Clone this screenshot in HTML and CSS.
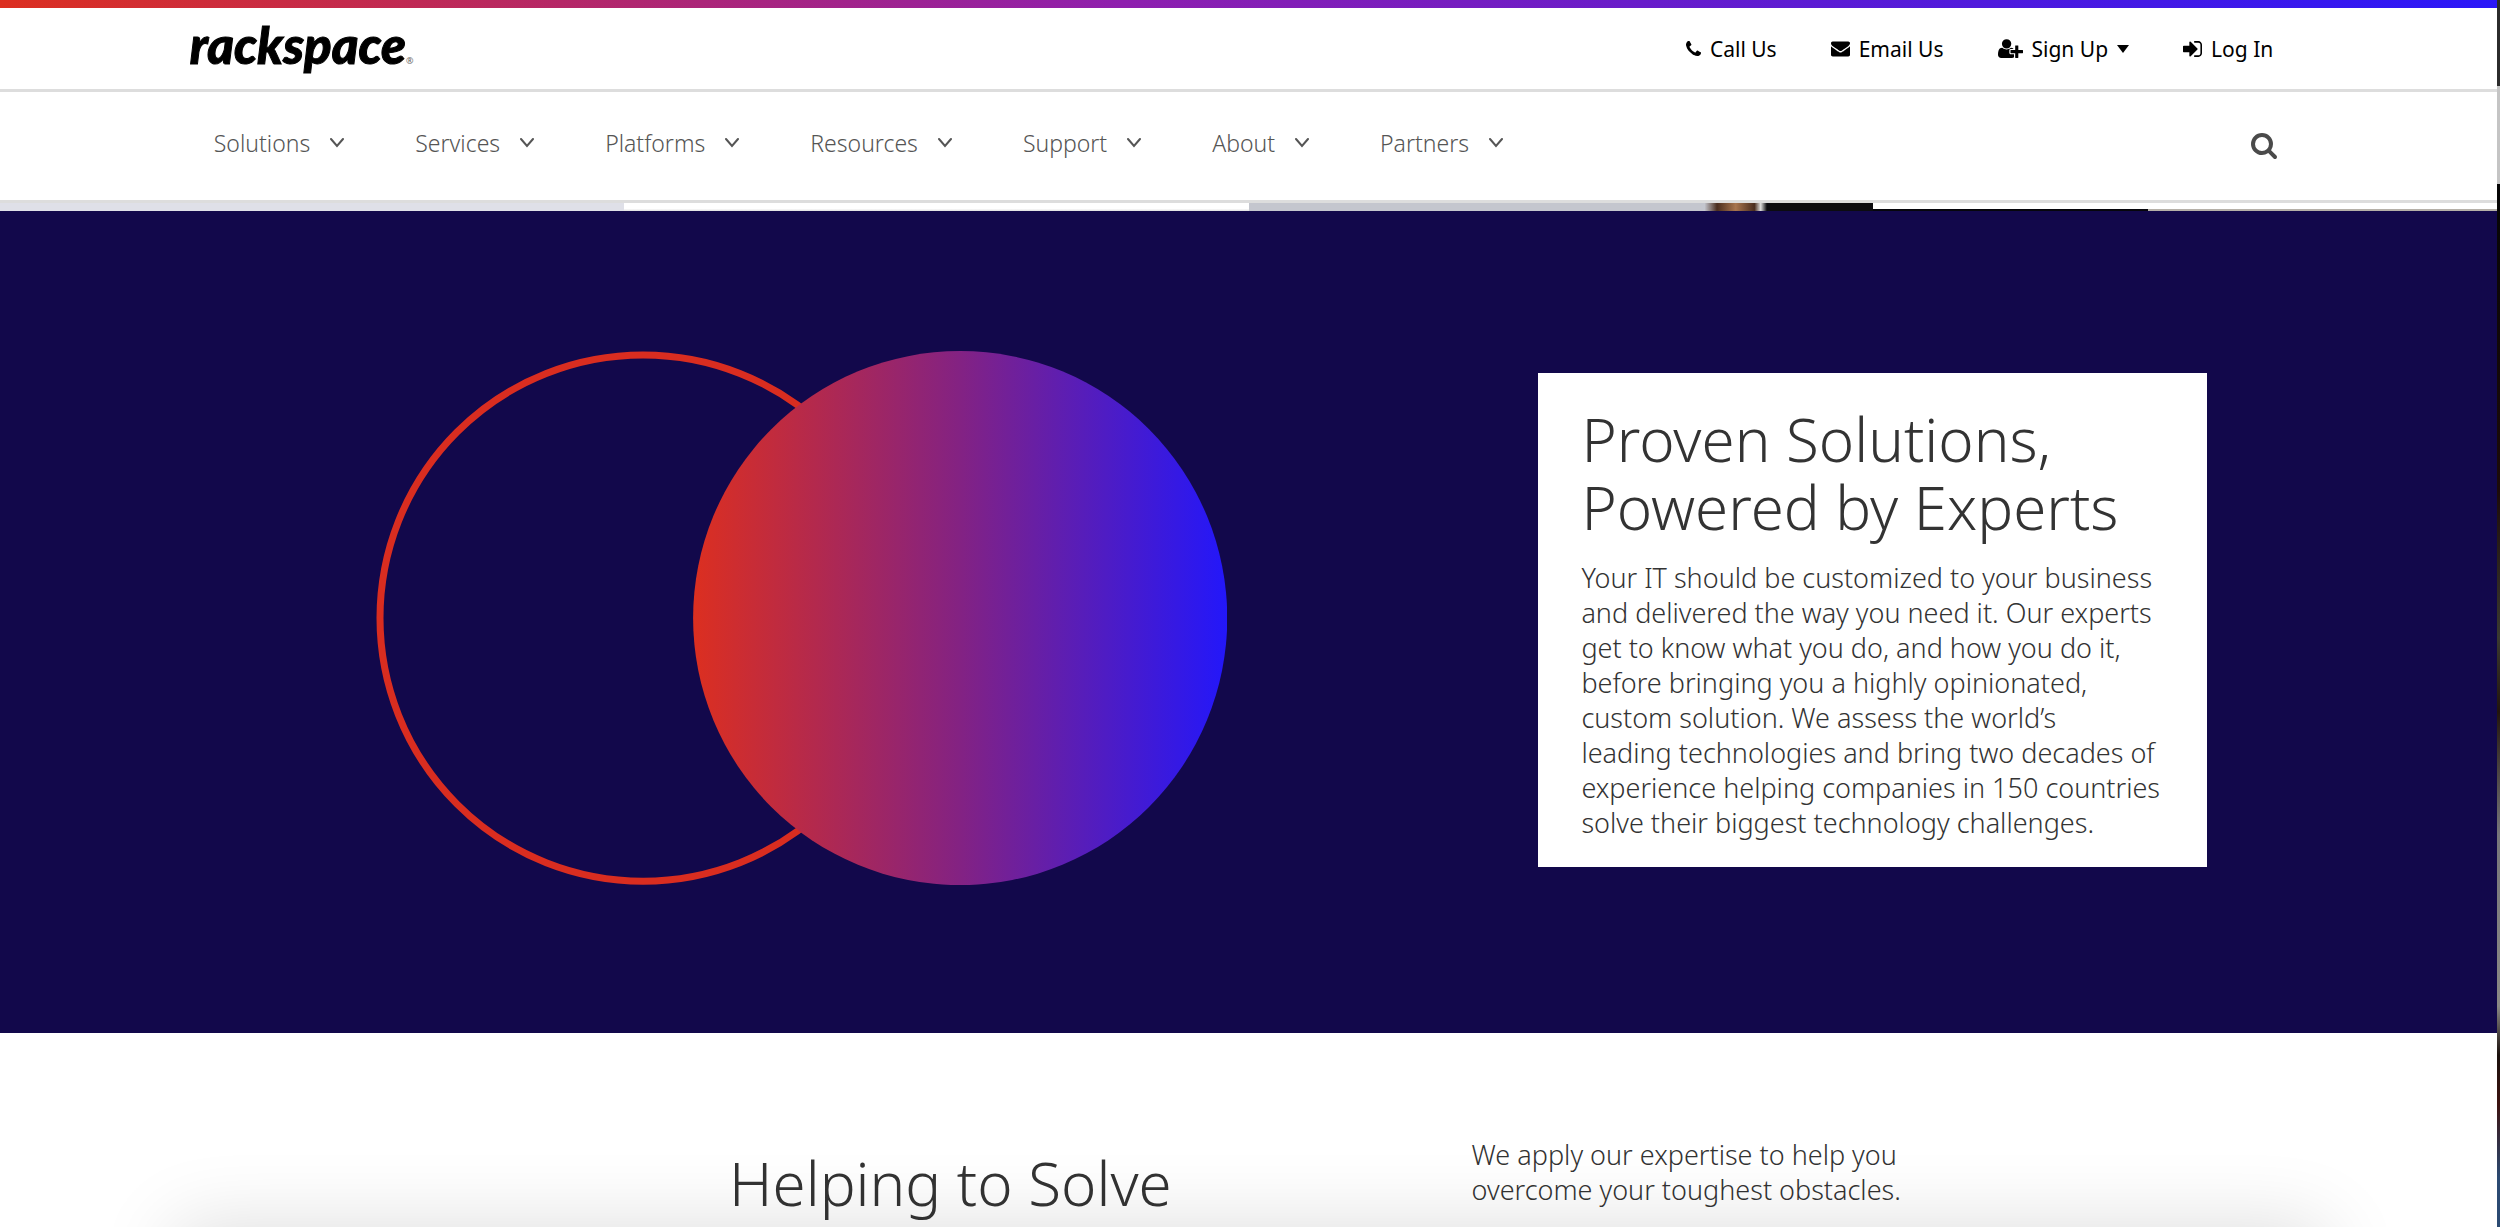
FILE: index.html
```html
<!DOCTYPE html>
<html lang="en">
<head>
  <meta charset="UTF-8">
  <meta name="viewport" content="width=device-width, initial-scale=1.0">
  <title>Rackspace</title>
  <link rel="stylesheet" href="styles.css">
</head>
<body>

<div class="page">

  <header class="header">
    <div class="brand-line"></div>

    <!-- Utility bar -->
    <div class="top-bar">
      <a class="logo" href="#">rackspace<span class="reg">®</span></a>
      <nav class="utility">
        <a href="#">
          <svg width="15" height="15" viewBox="0 128 1408 1408"><path d="M1408 1240q0 27-10 70.500t-21 68.500q-21 50-122 106-94 51-186 51-27 0-53-3.500t-57.500-12.500-47-14.500-55.500-20.500-49-18q-98-35-175-83-127-79-264-216t-216-264q-48-77-83-175-3-9-18-49t-20.500-55.500-14.500-47-12.500-57.500-3.500-53q0-92 51-186 56-101 106-122 25-11 68.500-21t70.500-10q14 0 21 3 18 6 53 76 11 19 30 54t35 63.500 31 53.500q3 4 17.500 25t21.500 35.500 7 28.500q0 20-28.500 50t-62 55-62 53-28.500 46q0 9 5 22.500t8.500 20.500 14 24 11.500 19q76 137 174 235t235 174q2 1 19 11.500t24 14 20.500 8.500 22.500 5q18 0 46-28.500t53-62 55-62 50-28.500q14 0 28.500 7t35.500 21.500 25 17.500q25 15 53.500 31t63.500 35 54 30q70 35 76 53 3 7 3 21z"/></svg>
          Call Us
        </a>
        <a href="#">
          <svg width="19" height="16" viewBox="0 256 1792 1408"><path d="M1792 710v794q0 66-47 113t-113 47h-1472q-66 0-113-47t-47-113v-794q44 49 101 87 362 246 497 345 57 42 92.500 65.500t94.500 48 110 24.500h2q51 0 110-24.500t94.500-48 92.500-65.500q170-123 498-345 57-39 100-87zm0-294q0 79-49 151t-122 123q-376 261-468 325-10 7-42.500 31t-54 38.500-52 32.500-57.500 27-50 9h-2q-23 0-50-9t-57.500-27-52-32.500-54-38.500-42.500-31q-91-64-262-182.500t-205-142.500q-62-42-117-115.500t-55-136.500q0-78 41.500-130t118.500-52h1472q65 0 112.500 47t47.500 113z"/></svg>
          Email Us
        </a>
        <a href="#">
          <svg width="25" height="19" viewBox="0 128 2048 1536"><path d="M704 896q-159 0-271.500-112.500t-112.500-271.500 112.500-271.500 271.500-112.500 271.500 112.500 112.500 271.500-112.500 271.500-271.500 112.500zm960 128h352q13 0 22.500 9.500t9.500 22.500v192q0 13-9.500 22.500t-22.500 9.500h-352v352q0 13-9.500 22.500t-22.500 9.500h-192q-13 0-22.500-9.500t-9.500-22.500v-352h-352q-13 0-22.500-9.500t-9.500-22.500v-192q0-13 9.500-22.500t22.500-9.500h352v-352q0-13 9.500-22.500t22.500-9.500h192q13 0 22.500 9.500t9.500 22.500v352zm-736 224q0 52 38 90t90 38h256v238q-68 50-171 50h-874q-121 0-194-69t-73-190q0-53 3.500-103.500t14-109 26.500-108.500 43-97.500 62-81 85.500-53.500 111.500-20q19 0 39 17 79 61 154.500 91.500t164.500 30.500 164.500-30.500 154.500-91.500q20-17 39-17 132 0 217 96h-223q-52 0-90 38t-38 90v192z"/></svg>
          Sign Up
          <svg width="12" height="8" viewBox="0 0 12 8"><path d="M0 0h12L6 8z"/></svg>
        </a>
        <a href="#">
          <svg width="19" height="16" viewBox="128 256 1536 1280"><path d="M1312 896q0 26-19 45l-544 544q-19 19-45 19t-45-19-19-45v-288h-448q-26 0-45-19t-19-45v-384q0-26 19-45t45-19h448v-288q0-26 19-45t45-19 45 19l544 544q19 19 19 45zm352-352v704q0 119-84.500 203.500t-203.500 84.500h-320q-13 0-22.500-9.500t-9.500-22.500q0-4-1-20t-.5-26.500 3-23.500 10-19.500 20.500-6.500h320q66 0 113-47t47-113v-704q0-66-47-113t-113-47h-312l-11.500-1-11.500-3-8-5.500-7-9-2-13.500q0-4-1-20t-.5-26.500 3-23.500 10-19.500 20.500-6.500h320q119 0 203.500 84.500t84.500 203.500z"/></svg>
          Log In
        </a>
      </nav>
    </div>

    <!-- Main menu -->
    <div class="menu-bar">
      <nav class="menu">
        <button>Solutions <svg class="chevron" viewBox="0 0 14 10"><path d="M1 1l6 7 6-7"/></svg></button>
        <button>Services <svg class="chevron" viewBox="0 0 14 10"><path d="M1 1l6 7 6-7"/></svg></button>
        <button>Platforms <svg class="chevron" viewBox="0 0 14 10"><path d="M1 1l6 7 6-7"/></svg></button>
        <button>Resources <svg class="chevron" viewBox="0 0 14 10"><path d="M1 1l6 7 6-7"/></svg></button>
        <button>Support <svg class="chevron" viewBox="0 0 14 10"><path d="M1 1l6 7 6-7"/></svg></button>
        <button>About <svg class="chevron" viewBox="0 0 14 10"><path d="M1 1l6 7 6-7"/></svg></button>
        <button>Partners <svg class="chevron" viewBox="0 0 14 10"><path d="M1 1l6 7 6-7"/></svg></button>
      </nav>
      <button class="search" aria-label="Search">
        <svg width="26" height="26" viewBox="64 128 1664 1664"><path d="M1216 832q0-185-131.500-316.500t-316.500-131.500-316.500 131.500-131.500 316.500 131.500 316.500 316.500 131.500 316.500-131.500 131.500-316.500zm512 832q0 52-38 90t-90 38q-54 0-90-38l-343-342q-179 124-399 124-143 0-273.500-55.500t-225-150-150-225-55.500-273.500 55.500-273.500 150-225 225-150 273.500-55.500 273.500 55.500 225 150 150 225 55.500 273.500q0 220-124 399l343 343q37 37 37 90z"/></svg>
      </button>
    </div>
  </header>

  <!-- Bottom edge of the tiles scrolled under the header -->
  <div class="tiles">
    <div class="tile tile-grey"></div>
    <div class="tile tile-white"></div>
    <div class="tile tile-photo"></div>
    <div class="tile tile-dark"></div>
  </div>

  <section class="hero">
    <svg class="circles" viewBox="0 0 852 534" aria-hidden="true">
      <defs>
        <linearGradient id="fade">
          <stop offset="0" stop-color="#dc2f20"/>
          <stop offset="0.500" stop-color="#832283"/>
          <stop offset="1" stop-color="#2317fa"/>
        </linearGradient>
      </defs>
      <circle cx="268" cy="267" r="263" fill="none" stroke="#d92d20" stroke-width="7"/>
      <circle cx="585" cy="267" r="267" fill="url(#fade)"/>
    </svg>
    <div class="card">
      <h1>Proven Solutions, Powered by Experts</h1>
      <p>Your IT should be customized to your business and delivered the way you need it. Our experts get to know what you do, and how you do it, before bringing you a highly opinionated, custom solution. We assess the world’s<br>leading technologies and bring two decades of experience helping companies in 150 countries solve their biggest technology challenges.</p>
    </div>
  </section>

  <section class="helping">
    <h2>Helping to Solve</h2>
    <p>We apply our expertise to help you<br>overcome your toughest obstacles.</p>
  </section>

</div>

<div class="bottom-shadow"></div>

</body>
</html>
```

FILE: styles.css
```css
* {
  margin: 0;
  padding: 0;
  box-sizing: border-box;
}

html {
  min-height: 100%;
  background: linear-gradient(#2b2b2b 7%, #c4c4c4 7%, #c4c4c4 15%, #050505 15%, #1d0b08 40%, #3b3a30 52%, #23150c 58%, #77767a 68%, #8a8884 82%, #1a100c 86%, #3c1210 90%, #2b4a72 96%);
}

body {
  min-height: 100vh;
  font-family: "Noto Sans", sans-serif;
  font-weight: 300;
  color: #333;
  overflow: hidden;
}

.page {
  min-height: 100vh;
  margin-right: 3px;
  background: #fff;
}

a {
  color: inherit;
  text-decoration: none;
}

button {
  font: inherit;
  color: inherit;
  background: none;
  border: none;
  cursor: pointer;
}

svg {
  display: block;
  flex: none;
  fill: currentColor;
}

/* Header */
.brand-line {
  height: 8px;
  background: linear-gradient(to right, #dc2f20, #8e1fae 45%, #2a17f8);
}

.top-bar,
.menu-bar {
  display: flex;
  align-items: center;
  justify-content: space-between;
  padding: 0 8.8% 0 7.6%;
  border-bottom: 3px solid #ddd;
}

.top-bar {
  height: 84px;
}

.logo {
  display: flex;
  align-items: baseline;
  padding-bottom: 8px;
  font: italic 900 51px/60px Lato, sans-serif;
  color: #000;
  -webkit-text-stroke: 1px #000;
}

.reg {
  font: 400 9px/9px "Noto Sans", sans-serif;
  color: #666;
  -webkit-text-stroke: 0;
}

.utility {
  display: flex;
  gap: 54px;
  padding-right: 4px;
  font-size: 21px;
  font-weight: 400;
  color: #000;
}

.utility a {
  display: flex;
  align-items: center;
  gap: 9px;
}

.menu-bar {
  height: 111px;
}

.menu {
  display: flex;
  gap: 71px;
  padding: 0 0 6px 24px;
  font-size: 23px;
  color: #555;
}

.menu button {
  display: flex;
  align-items: center;
  gap: 20px;
}

.chevron {
  width: 14px;
  height: 10px;
  fill: none;
  stroke: #555;
  stroke-width: 2;
  stroke-linecap: round;
}

.search {
  color: #4a4a4a;
}

/* Tiles */
.tiles {
  display: flex;
  height: 8px;
}

.tile {
  flex: 1;
}

.tile-grey {
  background: #dfe0e8;
}

.tile-white {
  background: linear-gradient(#fff 70%, #dedede);
}

.tile-photo {
  background: linear-gradient(to right, #c4c6ce 73%, #4a2d1e 75%, #a8754f 78%, #4a2d1e 81%, #ddd 82%, #0c0c10 83%);
}

.tile-dark {
  background: linear-gradient(to right, #06060c 44%, #b5b0a8 44%) bottom / 100% 2px no-repeat;
}

/* Hero */
.hero {
  display: flex;
  align-items: center;
  justify-content: space-between;
  min-height: 822px;
  padding: 0 11.6% 4px 15%;
  background: #12084b;
}

.circles {
  width: 46.5%;
  margin-bottom: 4px;
}

.card {
  width: 36.5%;
  padding: 32px 40px 27px 43px;
  background: #fff;
}

h1,
h2 {
  font-size: 60px;
  line-height: 68px;
  font-weight: 300;
}

p {
  font-size: 27px;
  line-height: 35px;
}

.card p {
  margin-top: 19px;
}

/* Helping */
.helping {
  display: grid;
  grid-template-columns: 42% 1fr;
  padding: 104px 0 0 29.2%;
}

.helping h2 {
  margin-top: 12px;
}

.bottom-shadow {
  position: fixed;
  left: 7%;
  right: 7%;
  bottom: -200px;
  height: 200px;
  box-shadow: 0 0 80px rgba(0, 0, 0, 0.14);
}
```
